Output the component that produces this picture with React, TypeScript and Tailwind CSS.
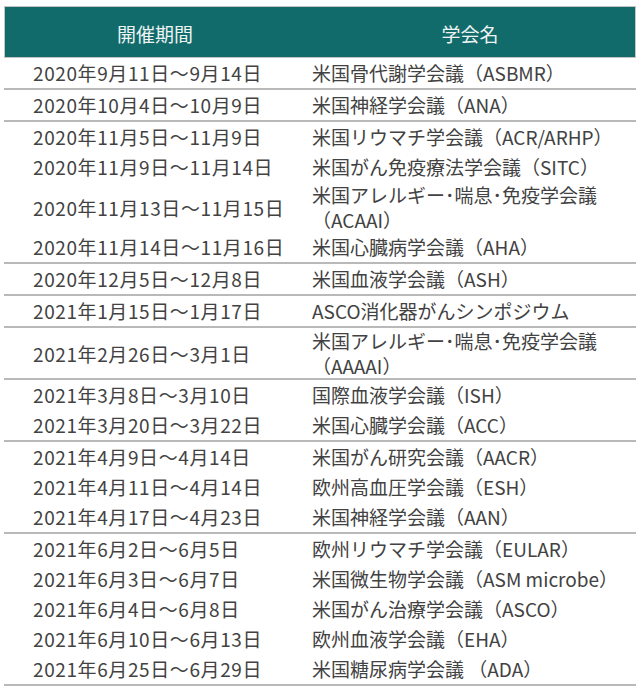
import React from "react";

type Row = { date: string; name: React.ReactNode; two?: boolean };

const groups: Row[][] = [
  [{ date: "2020年9月11日～9月14日", name: "米国骨代謝学会議（ASBMR）" }],
  [{ date: "2020年10月4日～10月9日", name: "米国神経学会議（ANA）" }],
  [
    { date: "2020年11月5日～11月9日", name: "米国リウマチ学会議（ACR/ARHP）" },
    { date: "2020年11月9日～11月14日", name: "米国がん免疫療法学会議（SITC）" },
    {
      date: "2020年11月13日～11月15日",
      name: (
        <>
          米国アレルギー･喘息･免疫学会議
          <br />
          （ACAAI）
        </>
      ),
      two: true,
    },
    { date: "2020年11月14日～11月16日", name: "米国心臓病学会議（AHA）" },
  ],
  [{ date: "2020年12月5日～12月8日", name: "米国血液学会議（ASH）" }],
  [{ date: "2021年1月15日～1月17日", name: "ASCO消化器がんシンポジウム" }],
  [
    {
      date: "2021年2月26日～3月1日",
      name: (
        <>
          米国アレルギー･喘息･免疫学会議
          <br />
          （AAAAI）
        </>
      ),
      two: true,
    },
  ],
  [
    { date: "2021年3月8日～3月10日", name: "国際血液学会議（ISH）" },
    { date: "2021年3月20日～3月22日", name: "米国心臓学会議（ACC）" },
  ],
  [
    { date: "2021年4月9日～4月14日", name: "米国がん研究会議（AACR）" },
    { date: "2021年4月11日～4月14日", name: "欧州高血圧学会議（ESH）" },
    { date: "2021年4月17日～4月23日", name: "米国神経学会議（AAN）" },
  ],
  [
    { date: "2021年6月2日～6月5日", name: "欧州リウマチ学会議（EULAR）" },
    { date: "2021年6月3日～6月7日", name: "米国微生物学会議（ASM microbe）" },
    { date: "2021年6月4日～6月8日", name: "米国がん治療学会議（ASCO）" },
    { date: "2021年6月10日～6月13日", name: "欧州血液学会議（EHA）" },
    { date: "2021年6月25日～6月29日", name: "米国糖尿病学会議 （ADA）" },
  ],
];

export default function App() {
  return (
    <div
      className="w-[640px] h-[700px] bg-white pt-[6px] pl-[4px] pr-[4px]"
      style={{ fontFamily: '"Noto Sans CJK JP", "Noto Sans", sans-serif' }}
    >
      <div className="flex h-[52px] border border-[#c4c4c4] bg-[#126b6b] text-[#eef4f4] text-[19px]">
        <div className="w-[300px] flex items-center justify-center pt-[4px]">開催期間</div>
        <div className="flex-1 flex items-center justify-center pt-[4px]">学会名</div>
      </div>
      {groups.map((g, gi) => (
        <div key={gi} className="border-b-2 border-[#b9b9b9]">
          {g.map((r, ri) => (
            <div
              key={ri}
              className={
                "flex text-[19px] text-[#424242] " +
                (r.two ? "leading-[25px]" : "leading-[22px] py-[4px]")
              }
            >
              <div className="w-[300px] pl-[29px] flex items-center whitespace-nowrap tracking-[0.6px]">
                {r.date}
              </div>
              <div className="flex-1 pl-[8px] whitespace-nowrap">{r.name}</div>
            </div>
          ))}
        </div>
      ))}
    </div>
  );
}
